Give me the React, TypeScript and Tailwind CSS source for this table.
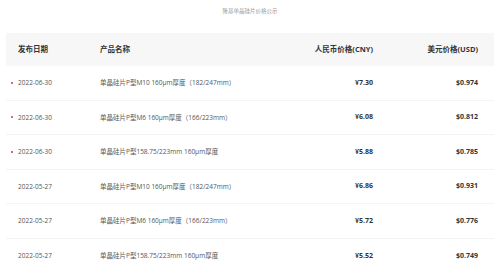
const rows = [
  { date: '2022-06-30', name: '单晶硅片P型M10 160μm厚度（182/247mm）', cny: '¥7.30', usd: '$0.974', dot: true },
  { date: '2022-06-30', name: '单晶硅片P型M6 160μm厚度（166/223mm）', cny: '¥6.08', usd: '$0.812', dot: true },
  { date: '2022-06-30', name: '单晶硅片P型158.75/223mm 160μm厚度', cny: '¥5.88', usd: '$0.785', dot: true },
  { date: '2022-05-27', name: '单晶硅片P型M10 160μm厚度（182/247mm）', cny: '¥6.86', usd: '$0.931', dot: false },
  { date: '2022-05-27', name: '单晶硅片P型M6 160μm厚度（166/223mm）', cny: '¥5.72', usd: '$0.776', dot: false },
  { date: '2022-05-27', name: '单晶硅片P型158.75/223mm 160μm厚度', cny: '¥5.52', usd: '$0.749', dot: false },
];

// column template shared by header and rows
const cols = 'grid grid-cols-[82px_153px_120px_105px] items-center pl-[12px] pr-[15px]';

export default function App() {
  return (
    <div
      className="w-[500px] h-[271px] overflow-hidden bg-white"
      style={{ fontFamily: '"Open Sans", "Noto Sans CJK SC", sans-serif' }}
    >
      {/* Caption */}
      <div className="h-[33px] pt-[8px] text-center text-[5.5px] leading-[6px] text-[#999]">
        隆基单晶硅片价格公示
      </div>

      <div className="mx-[6px]">
        {/* Header */}
        <div className={`${cols} h-[33px] bg-[#f7f7f7] text-[7.5px] font-bold text-[#333]`}>
          <div>发布日期</div>
          <div>产品名称</div>
          <div className="text-right">人民币价格(CNY)</div>
          <div className="text-right">美元价格(USD)</div>
        </div>

        {/* Rows */}
        {rows.map((r, i) => (
          <div key={i} className={`${cols} h-[34.6px] border-b border-[#f4f4f4] text-[6.5px]`}>
            <div className="flex items-center text-[#555]">
              {r.dot && <span className="ml-[-7px] mr-[5px] w-[2px] h-[2px] rounded-full bg-[#c8356a]" />}
              {r.date}
            </div>
            <div className="text-[#555] whitespace-nowrap">{r.name}</div>
            <div className="text-right font-bold text-[7px] text-[#333]">{r.cny}</div>
            <div className="text-right font-bold text-[7px] text-[#333]">{r.usd}</div>
          </div>
        ))}
      </div>
    </div>
  );
}
